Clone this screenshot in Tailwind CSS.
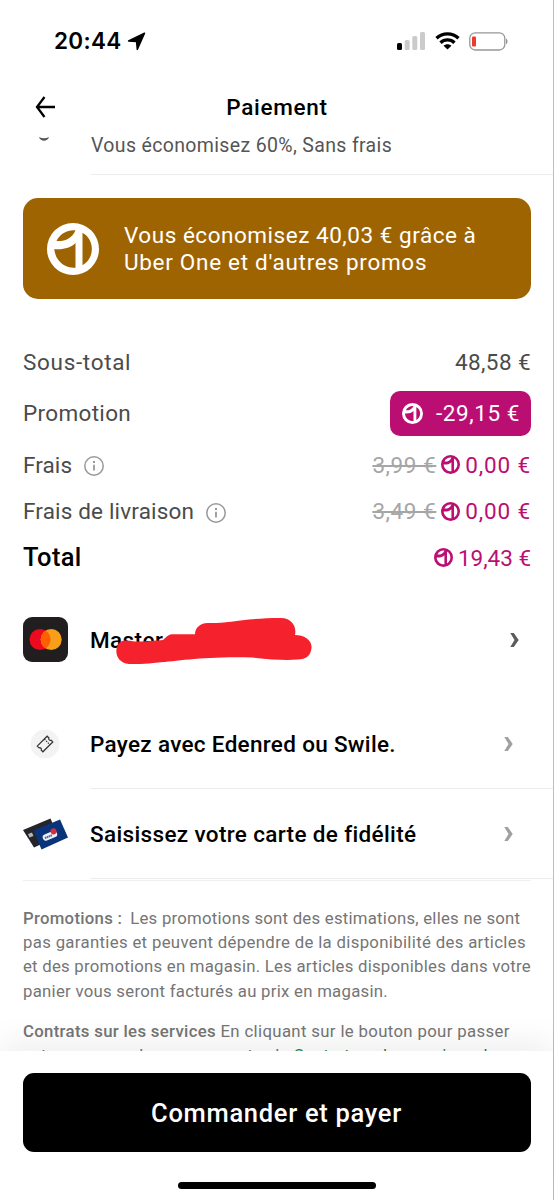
<!DOCTYPE html>
<html lang="fr">
<head>
<meta charset="utf-8">
<title>Paiement</title>
<script src="https://cdn.jsdelivr.net/npm/@tailwindcss/browser@4"></script>
</head>
<body class="h-[1200px] w-[554px] overflow-hidden bg-white font-[Roboto,sans-serif] text-black">
<svg class="hidden">
  <symbol id="one" viewBox="0 0 52 52">
    <path fill-rule="evenodd" fill="currentColor" d="M26 0a26 26 0 1 1 0 52 26 26 0 0 1 0-52ZM28.500 7.200C20 6.600 12.500 11 9.500 18 18 18.500 25 15.500 28.500 7.200ZM7.300 26C8 37 17 45.500 28.500 44.700V20C24 25 15 27 7.300 26ZM35.500 9.800V42.200C48 35.500 48 16.500 35.500 9.800Z"/>
  </symbol>
  <symbol id="info" viewBox="0 0 20 20">
    <circle cx="10" cy="10" r="9.200" fill="none" stroke="currentColor" stroke-width="1.500"/>
    <path d="M9 5h2v2.100H9ZM9.100 8.700h1.800v5.800H9.100Z" fill="currentColor"/>
  </symbol>
  <symbol id="chev" viewBox="0 0 9 14"><path d="M.3 0h3.500l4.900 7-4.900 7H.3l4.200-7Z" fill="currentColor"/></symbol>
</svg>
<div class="flex h-full flex-col border-r border-[#bdbdbd]">
  <header class="shrink-0">
    <div class="flex h-[82px] items-center pr-[45px] pl-[54px]">
      <span class="pt-px font-[Inter,sans-serif] text-[22.5px] leading-none font-semibold tracking-[0.3px]">20:44</span>
      <svg class="ml-[5px] h-[19px] w-[19px]" viewBox="0 0 19 19"><path d="M17.500 1.200 10.300 17.400 9.600 9.600 1.600 9Z" stroke="#000" stroke-width="1.500" stroke-linejoin="round"/></svg>
      <svg class="ml-auto h-[18px] w-[28px]" viewBox="0 0 28 18"><rect y="11" width="5" height="7" rx="1.500"/><g fill="#cbcbcb"><rect x="7.700" y="8" width="5" height="10" rx="1.500"/><rect x="15.300" y="4" width="5" height="14" rx="1.500"/><rect x="23" width="5" height="18" rx="1.500"/></g></svg>
      <svg class="ml-[10px] h-[18px] w-[25px]" viewBox="0 0 25 18"><g fill="none" stroke="#000" stroke-width="3.300"><path d="M1.500 6.200C7.500.3 17.500.3 23.500 6.200"/><path d="M5.500 10.800C9.500 7 15.500 7 19.500 10.800"/></g><path d="m8.600 13.800c2.200-2 5.600-2 7.800 0L12.500 17.600Z"/></svg>
      <svg class="ml-[9px] h-[19px] w-[39px]" viewBox="0 0 39 19"><rect x=".8" y=".8" width="35" height="17.200" rx="5.500" fill="none" stroke="#969696" stroke-width="1.300"/><rect x="3" y="4.500" width="4" height="10" rx="1" fill="#ee3a2d"/><path d="M37 6.500c2 .8 2 5 0 5.800Z" fill="#969696"/></svg>
    </div>
    <div class="grid h-[50px] grid-cols-[1fr_auto_1fr] items-center pl-[35px] pr-[35px]">
      <svg class="h-[22px] w-[21px]" viewBox="0 0 21 22" fill="none" stroke="#000" stroke-width="2.300"><path d="M20 11H2M9.500 1 2 11l7.500 10"/></svg>
      <h1 class="pl-px text-[22.5px] leading-none font-medium tracking-[0.7px]">Paiement</h1>
    </div>
  </header>

  <main class="flex min-h-0 flex-1 flex-col overflow-hidden">
    <div class="flex h-[43px] shrink-0">
      <svg class="mt-[5px] ml-[39px] h-[5px] w-[10px]" viewBox="0 0 10 5"><path d="M0 0c3 1.600 7 1.600 10 0C8.500 5 1.500 5 0 0Z" fill="#555"/></svg>
      <p class="ml-[42px] grow border-b border-[#ececec] text-[19.5px] leading-[27px] font-normal tracking-[0.35px] text-[#555]">Vous économisez 60%, Sans frais</p>
    </div>

    <section class="mx-[23px] mt-[23px] flex h-[101px] w-[508px] shrink-0 items-center rounded-[15px] bg-[#9f6402] pl-[24px] text-white">
      <svg class="size-[52px]"><use href="#one"/></svg>
      <p class="ml-[25px] text-[22.5px] leading-[26.500px]"><span class="tracking-[0.53px]">Vous économisez 40,03 € grâce à</span><br><span class="tracking-[0.7px]">Uber One et d'autres promos</span></p>
    </section>

    <section class="mx-[23px] mt-[37px] w-[508px] shrink-0 text-[22.5px] leading-none text-[#4b4b4b]">
      <div class="flex h-[53px] items-center justify-between"><span class="tracking-[0.68px]">Sous-total</span><span class="tracking-[0.4px]">48,58 €</span></div>
      <div class="flex h-[48px] items-center justify-between"><span class="tracking-[0.33px]">Promotion</span>
        <span class="flex h-[45px] w-[141px] items-center rounded-[10px] bg-[#bb0e73] pl-[12px] text-white"><svg class="size-[21px]"><use href="#one"/></svg><span class="ml-[13px] pt-px tracking-[0.56px]">-29,15 €</span></span></div>
      <div class="flex h-[55px] items-center"><span class="pt-px tracking-[0.1px]">Frais</span><svg class="mt-[3px] ml-[12px] size-[20px] text-[#999]"><use href="#info"/></svg>
        <span class="ml-auto pt-px tracking-[0.55px] text-[#a6a6a6] line-through decoration-[1.5px]">3,99 €</span><svg class="ml-[5px] size-[19px] text-[#bb0e73]"><use href="#one"/></svg><span class="ml-[5px] pt-px tracking-[0.85px] text-[#bb0e73]">0,00 €</span></div>
      <div class="flex h-[38px] items-center"><span class="pt-px tracking-[0.17px]">Frais de livraison</span><svg class="mt-[3px] ml-[12px] size-[20px] text-[#999]"><use href="#info"/></svg>
        <span class="ml-auto pt-px tracking-[0.55px] text-[#a6a6a6] line-through decoration-[1.5px]">3,49 €</span><svg class="ml-[5px] size-[19px] text-[#bb0e73]"><use href="#one"/></svg><span class="ml-[5px] pt-px tracking-[0.85px] text-[#bb0e73]">0,00 €</span></div>
      <div class="flex h-[54px] items-center text-[#bb0e73]"><span class="pt-[2px] text-[25.5px] font-medium tracking-[0.3px] text-black">Total</span><svg class="ml-auto size-[19px]"><use href="#one"/></svg><span class="ml-[5px] pt-[2px] tracking-[-0.03px]">19,43 €</span></div>
    </section>

    <section class="mt-[16px] shrink-0 text-[22.5px] leading-none font-medium">
      <div class="relative flex h-[79px] items-center pl-[23px]">
        <svg class="size-[45px]" viewBox="0 0 45 45"><rect width="45" height="45" rx="9" fill="#211e1f"/><circle cx="17" cy="22.500" r="10.500" fill="#eb0a1e"/><circle cx="28.200" cy="22.500" r="10.500" fill="#f79f1b"/><path d="M22.600 13.600a10.500 10.500 0 0 1 0 17.800 10.500 10.500 0 0 1 0-17.800Z" fill="#ff5f00"/></svg>
        <span class="ml-[22px] pt-[2px] tracking-[0.4px]">Master</span>
        <svg class="absolute top-[18px] left-[116px] h-[46px] w-[196px]" viewBox="0 0 196 46"><path d="M13 46C-4 44 -2 24 8 22.500c6-.6 8 1.500 17 1 9-.5 16-.8 22-1.500 6-6 7-5.800 13-5.800H79C79 11 83 5 92 5c17 1 36-5 73-5 10 0 16 8 14 17 9 0 17 5 16.500 12.500-.5 8-5 12-14 12-12 1-26 0-45-2C90 38 62 43 42 44.500c-10 1-19 2-29 1.500Z" fill="#f5222e"/></svg>
        <svg class="mr-[34px] ml-auto h-[14px] w-[9px] text-[#5c5c5c]"><use href="#chev"/></svg>
      </div>
      <div class="flex h-[110px]">
        <svg class="mt-[50px] ml-[30px] size-[30px]" viewBox="0 0 30 30"><circle cx="15" cy="15" r="14.500" fill="#f3f3f3"/><g transform="rotate(-45 15 15)" fill="none" stroke="#333" stroke-width="1.200"><path d="M8 11h14v2.500a1.700 1.700 0 0 0 0 3.200V19H8v-2.300a1.700 1.700 0 0 0 0-3.200Z"/><path d="M18 11v8" stroke-dasharray="1.500 1"/></g></svg>
        <div class="ml-[30px] flex grow items-center border-b border-[#ececec] pt-[21px] pr-[40px]"><span class="tracking-[0.31px]">Payez avec Edenred ou Swile.</span><svg class="ml-auto h-[14px] w-[9px] text-[#a0a0a0]"><use href="#chev"/></svg></div>
      </div>
      <div class="flex h-[90px]">
        <svg class="mt-[27px] ml-[22px] h-[36px] w-[46px]" viewBox="0 0 46 36"><path d="m1 14 27.500-11.500 7.500 18L12 31.500Z" fill="#24242a"/><path d="m6 18 4-1.500 1.500 3.500-4 1.500Z" fill="#b5b5b5"/><path d="M11.500 14.500 38 3.500 46 21.500 19.500 33.500Z" fill="#09347b"/><g transform="rotate(-22 28 20)"><rect x="20.500" y="16.500" width="15" height="6.500" rx="3" fill="#eceff5"/><circle cx="33" cy="17" r="3" fill="#dc2944"/><path d="M22.500 20h7.500" stroke="#50648f" stroke-width="2" stroke-dasharray="1.500 .5"/></g></svg>
        <div class="ml-[22px] flex grow items-center border-b border-[#ececec] pr-[40px]"><span class="pt-[2px] tracking-[0.35px]">Saisissez votre carte de fidélité</span><svg class="ml-auto h-[14px] w-[9px] text-[#a0a0a0]"><use href="#chev"/></svg></div>
      </div>
    </section>

    <section class="mx-[23px] mt-px w-[520px] shrink-0 text-[16.75px] leading-[24.2px] whitespace-nowrap text-[#757575]">
      <div class="mb-[25px] w-[508px] border-t border-[#f0f0f0]"></div>
      <p><b class="font-medium tracking-[0.28px]">Promotions :</b><span class="ml-[8px] tracking-[0.24px]">Les promotions sont des estimations, elles ne sont</span></p>
      <p class="tracking-[0.33px]">pas garanties et peuvent dépendre de la disponibilité des articles</p>
      <p class="tracking-[0.24px]">et des promotions en magasin. Les articles disponibles dans votre</p>
      <p class="tracking-[0.27px]">panier vous seront facturés au prix en magasin.</p>
      <p class="mt-[16px] tracking-[0.35px]"><b class="font-medium tracking-[0.32px]">Contrats sur les services</b> En cliquant sur le bouton pour passer</p>
      <p class="tracking-[0.25px]">votre commande, vous acceptez le <span class="text-[#16853c]">Contrat sur les services de</span></p>
    </section>
  </main>

  <footer class="relative flex h-[149px] shrink-0 flex-col items-center bg-white pt-[22px] shadow-[0_-8px_32px_rgba(0,0,0,0.07)]">
    <button class="h-[79px] w-[508px] rounded-[11px] bg-black pt-[2px] text-[25.5px] leading-none font-medium tracking-[0.7px] text-white">Commander et payer</button>
    <div class="mt-[30px] h-[7px] w-[198px] rounded-full bg-black"></div>
  </footer>
</div>
</body>
</html>
